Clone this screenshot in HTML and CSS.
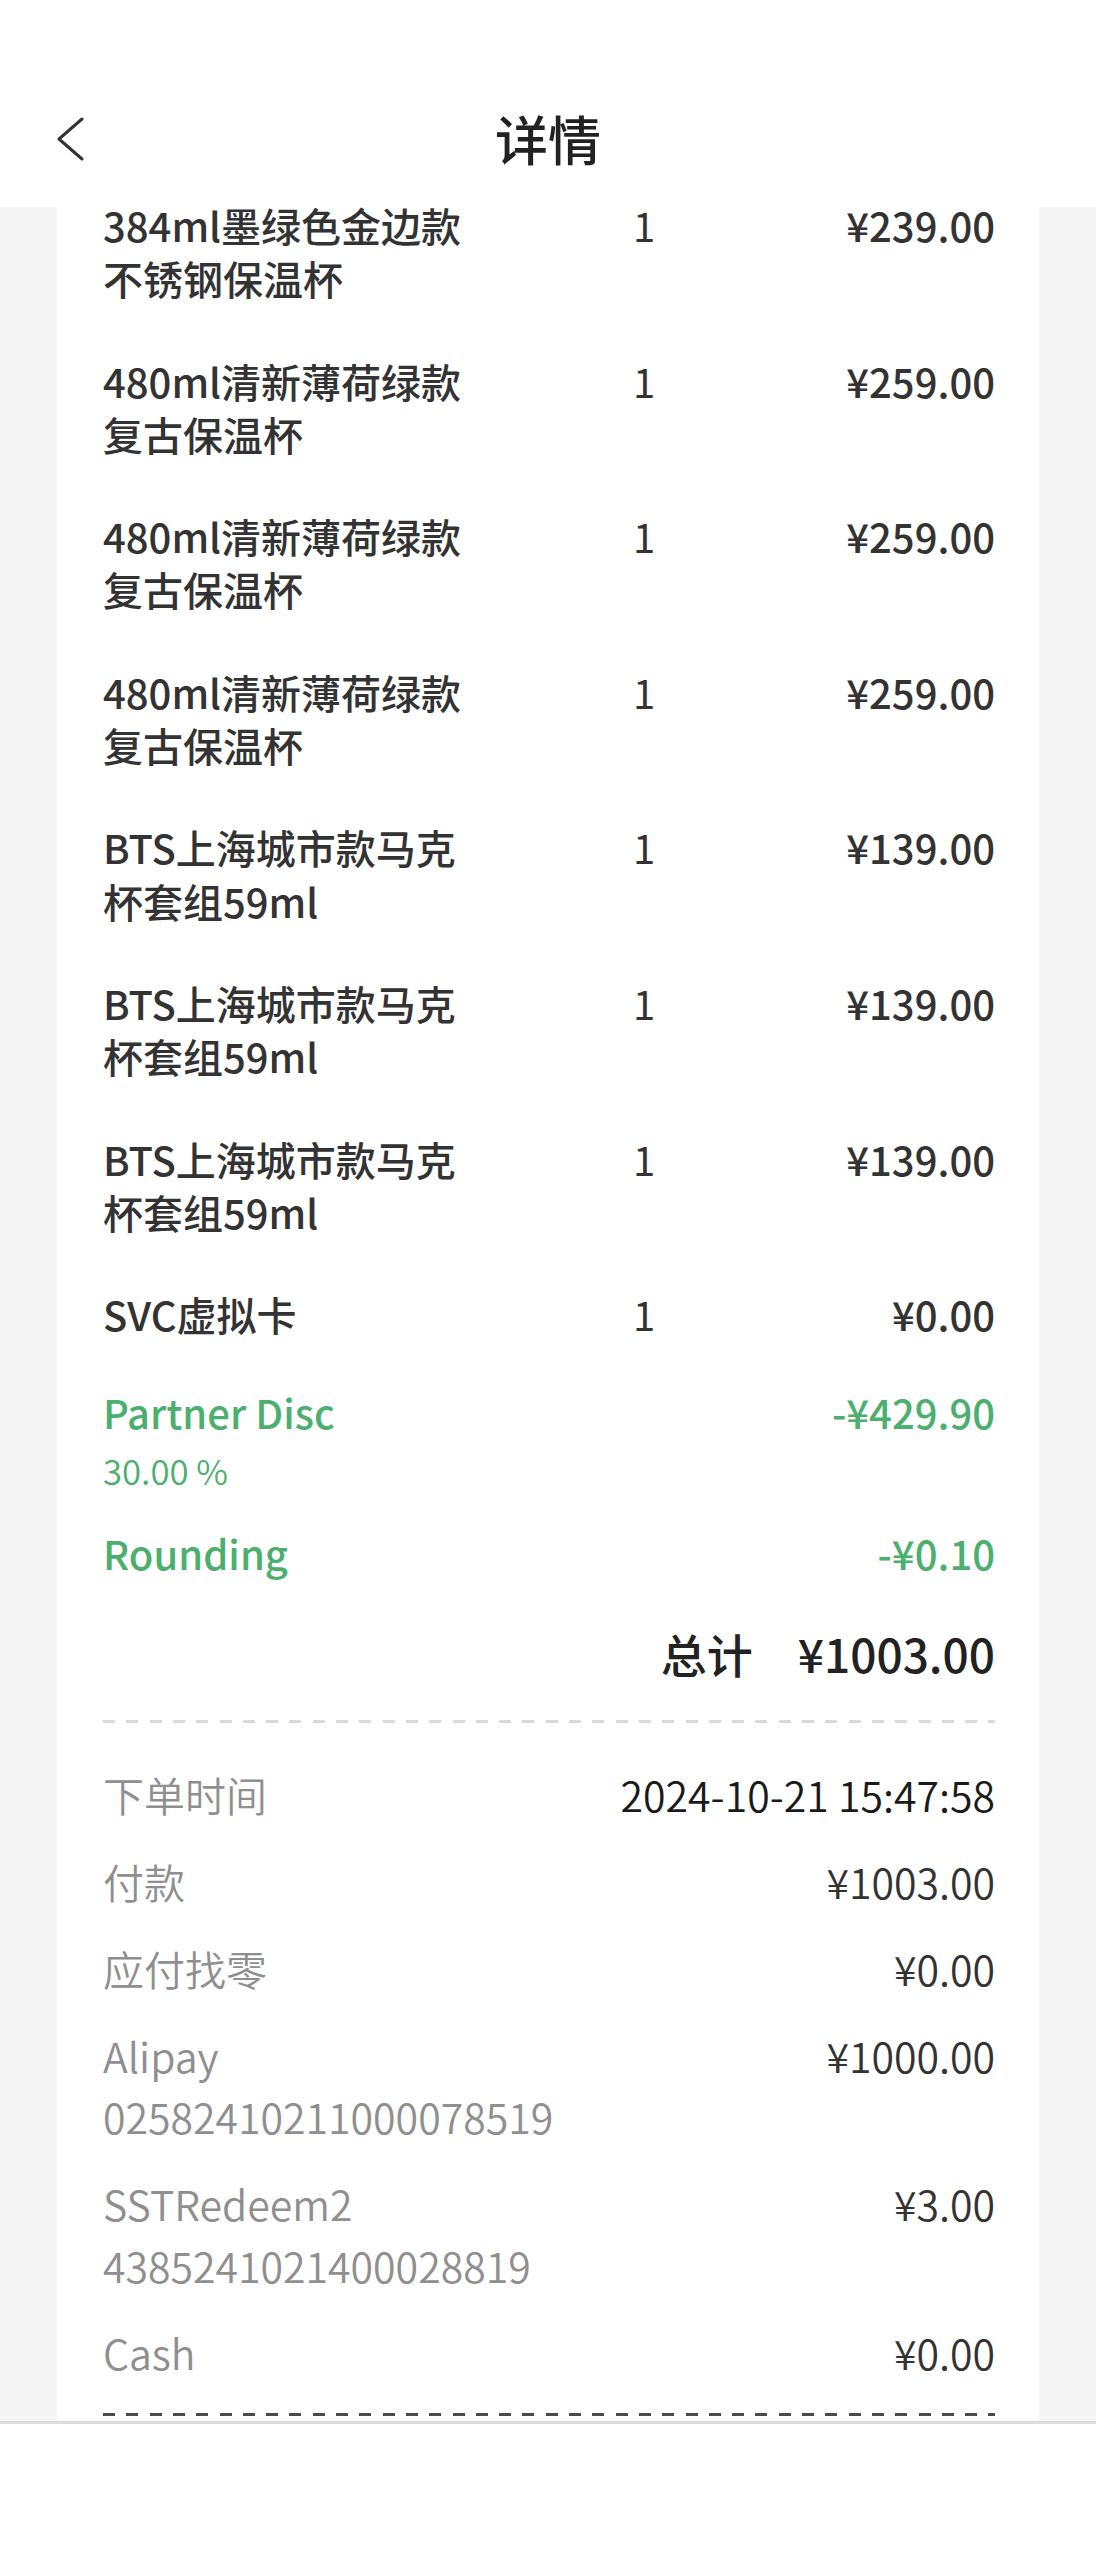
FILE: index.html
```html
<!DOCTYPE html>
<html lang="zh-CN">
<head>
<meta charset="utf-8">
<title>详情</title>
<link rel="stylesheet" href="styles.css">
</head>
<body>
<header class="nav">
  <div class="nav-left">
    <svg class="back" width="30" height="48" viewBox="0 0 30 48" aria-label="返回">
      <polyline points="25,5 2,25 25,45" fill="none" stroke="#333" stroke-width="3" stroke-linecap="round" stroke-linejoin="round"/>
    </svg>
  </div>
  <h1 class="nav-title">详情</h1>
  <div class="nav-right"></div>
</header>

<main class="scroll">
  <section class="receipt">
    <ul class="items">
      <li class="item"><span class="item-name">384ml墨绿色金边款不锈钢保温杯</span><span class="item-qty">1</span><span class="item-price">¥239.00</span></li>
      <li class="item"><span class="item-name">480ml清新薄荷绿款复古保温杯</span><span class="item-qty">1</span><span class="item-price">¥259.00</span></li>
      <li class="item"><span class="item-name">480ml清新薄荷绿款复古保温杯</span><span class="item-qty">1</span><span class="item-price">¥259.00</span></li>
      <li class="item"><span class="item-name">480ml清新薄荷绿款复古保温杯</span><span class="item-qty">1</span><span class="item-price">¥259.00</span></li>
      <li class="item"><span class="item-name">BTS上海城市款马克杯套组59ml</span><span class="item-qty">1</span><span class="item-price">¥139.00</span></li>
      <li class="item"><span class="item-name">BTS上海城市款马克杯套组59ml</span><span class="item-qty">1</span><span class="item-price">¥139.00</span></li>
      <li class="item"><span class="item-name">BTS上海城市款马克杯套组59ml</span><span class="item-qty">1</span><span class="item-price">¥139.00</span></li>
      <li class="item"><span class="item-name">SVC虚拟卡</span><span class="item-qty">1</span><span class="item-price">¥0.00</span></li>
    </ul>

    <ul class="adjustments">
      <li class="adjust">
        <div class="adjust-main"><span>Partner Disc</span><span>-¥429.90</span></div>
        <div class="adjust-sub">30.00 %</div>
      </li>
      <li class="adjust">
        <div class="adjust-main"><span>Rounding</span><span>-¥0.10</span></div>
      </li>
    </ul>

    <div class="total"><span class="total-label">总计</span><span class="total-value">¥1003.00</span></div>

    <div class="dash dash-light"></div>

    <dl class="info">
      <div class="info-row"><dt>下单时间</dt><dd class="strong">2024-10-21 15:47:58</dd></div>
      <div class="info-row"><dt>付款</dt><dd>¥1003.00</dd></div>
      <div class="info-row"><dt>应付找零</dt><dd>¥0.00</dd></div>
      <div class="info-row"><dt>Alipay<br>02582410211000078519</dt><dd>¥1000.00</dd></div>
      <div class="info-row"><dt>SSTRedeem2<br>4385241021400028819</dt><dd>¥3.00</dd></div>
      <div class="info-row"><dt>Cash</dt><dd>¥0.00</dd></div>
    </dl>

    <div class="dash dash-dark"></div>
  </section>
</main>

<footer class="bottom-bar"></footer>
</body>
</html>
```
FILE: styles.css
```css
* { box-sizing: border-box; }

html, body {
  margin: 0;
  padding: 0;
}

body {
  width: 1096px;
  height: 2560px;
  overflow: hidden;
  display: flex;
  flex-direction: column;
  background: #ffffff;
  font-family: "Noto Sans CJK SC", "Noto Sans", sans-serif;
  color: #333333;
}

ul, dl, dd, h1 {
  margin: 0;
  padding: 0;
  list-style: none;
}

/* ---------- header ---------- */
.nav {
  flex: 0 0 207px;
  height: 207px;
  padding-top: 69px;
  display: grid;
  grid-template-columns: 1fr auto 1fr;
  align-items: center;
  background: #ffffff;
  position: relative;
  z-index: 2;
}

.nav-left {
  padding-left: 57px;
  display: flex;
  align-items: center;
}

.back { display: block; }

.nav-title {
  font-size: 53px;
  line-height: 1;
  font-weight: 500;
  color: #222222;
}

/* ---------- scroll area ---------- */
.scroll {
  flex: 1 1 auto;
  overflow: hidden;
  background: #f5f5f5;
  padding: 0 57px;
}

.receipt {
  background: #ffffff;
  padding: 0 44px 60px 46px;
}

/* items */
.items {
  margin-top: -8px;
  display: flex;
  flex-direction: column;
  gap: 49px;
  font-size: 40px;
  line-height: 53.3px;
}

.item {
  display: grid;
  grid-template-columns: 530px 1fr auto;
  align-items: start;
}

.item-name {
  max-width: 372px;
  font-weight: 500;
  color: #333333;
}

.item-qty {
  font-weight: 400;
  color: #333333;
}

.item-price {
  font-weight: 500;
  color: #333333;
  text-align: right;
}

/* adjustments */
.adjustments {
  margin-top: 45px;
  display: flex;
  flex-direction: column;
  gap: 34px;
  color: #4caf6e;
}

.adjust-main {
  display: flex;
  justify-content: space-between;
  font-size: 40px;
  line-height: 53.3px;
  font-weight: 500;
}

.adjust-sub {
  margin-top: 7.7px;
  font-size: 34.7px;
  line-height: 46px;
  font-weight: 350;
}

/* total */
.total {
  margin-top: 40px;
  display: flex;
  justify-content: flex-end;
  align-items: baseline;
  gap: 45px;
  font-size: 46px;
  line-height: 64px;
  font-weight: 500;
  color: #222222;
}

/* dashes */
.dash {
  height: 3px;
}

.dash-light {
  margin-top: 35px;
  background: repeating-linear-gradient(to right, #d9d9d9 0 12px, transparent 12px 23.3px);
}

.dash-dark {
  margin-top: 30px;
  background: repeating-linear-gradient(to right, #4a4a4a 0 12px, transparent 12px 23.3px);
}

/* info */
.info {
  margin: 41px 0 0;
  display: flex;
  flex-direction: column;
  gap: 25.5px;
  font-size: 41px;
  line-height: 61.5px;
  font-weight: 350;
}

.info-row {
  display: flex;
  justify-content: space-between;
  align-items: flex-start;
}

.info-row dt {
  color: #8f8f8f;
}

.info-row dd {
  color: #333333;
  text-align: right;
}

.info-row dd.strong {
  color: #1a1a1a;
}

/* bottom bar */
.bottom-bar {
  flex: 0 0 139px;
  height: 139px;
  background: #ffffff;
  border-top: 3px solid #dcdcdc;
}
```
